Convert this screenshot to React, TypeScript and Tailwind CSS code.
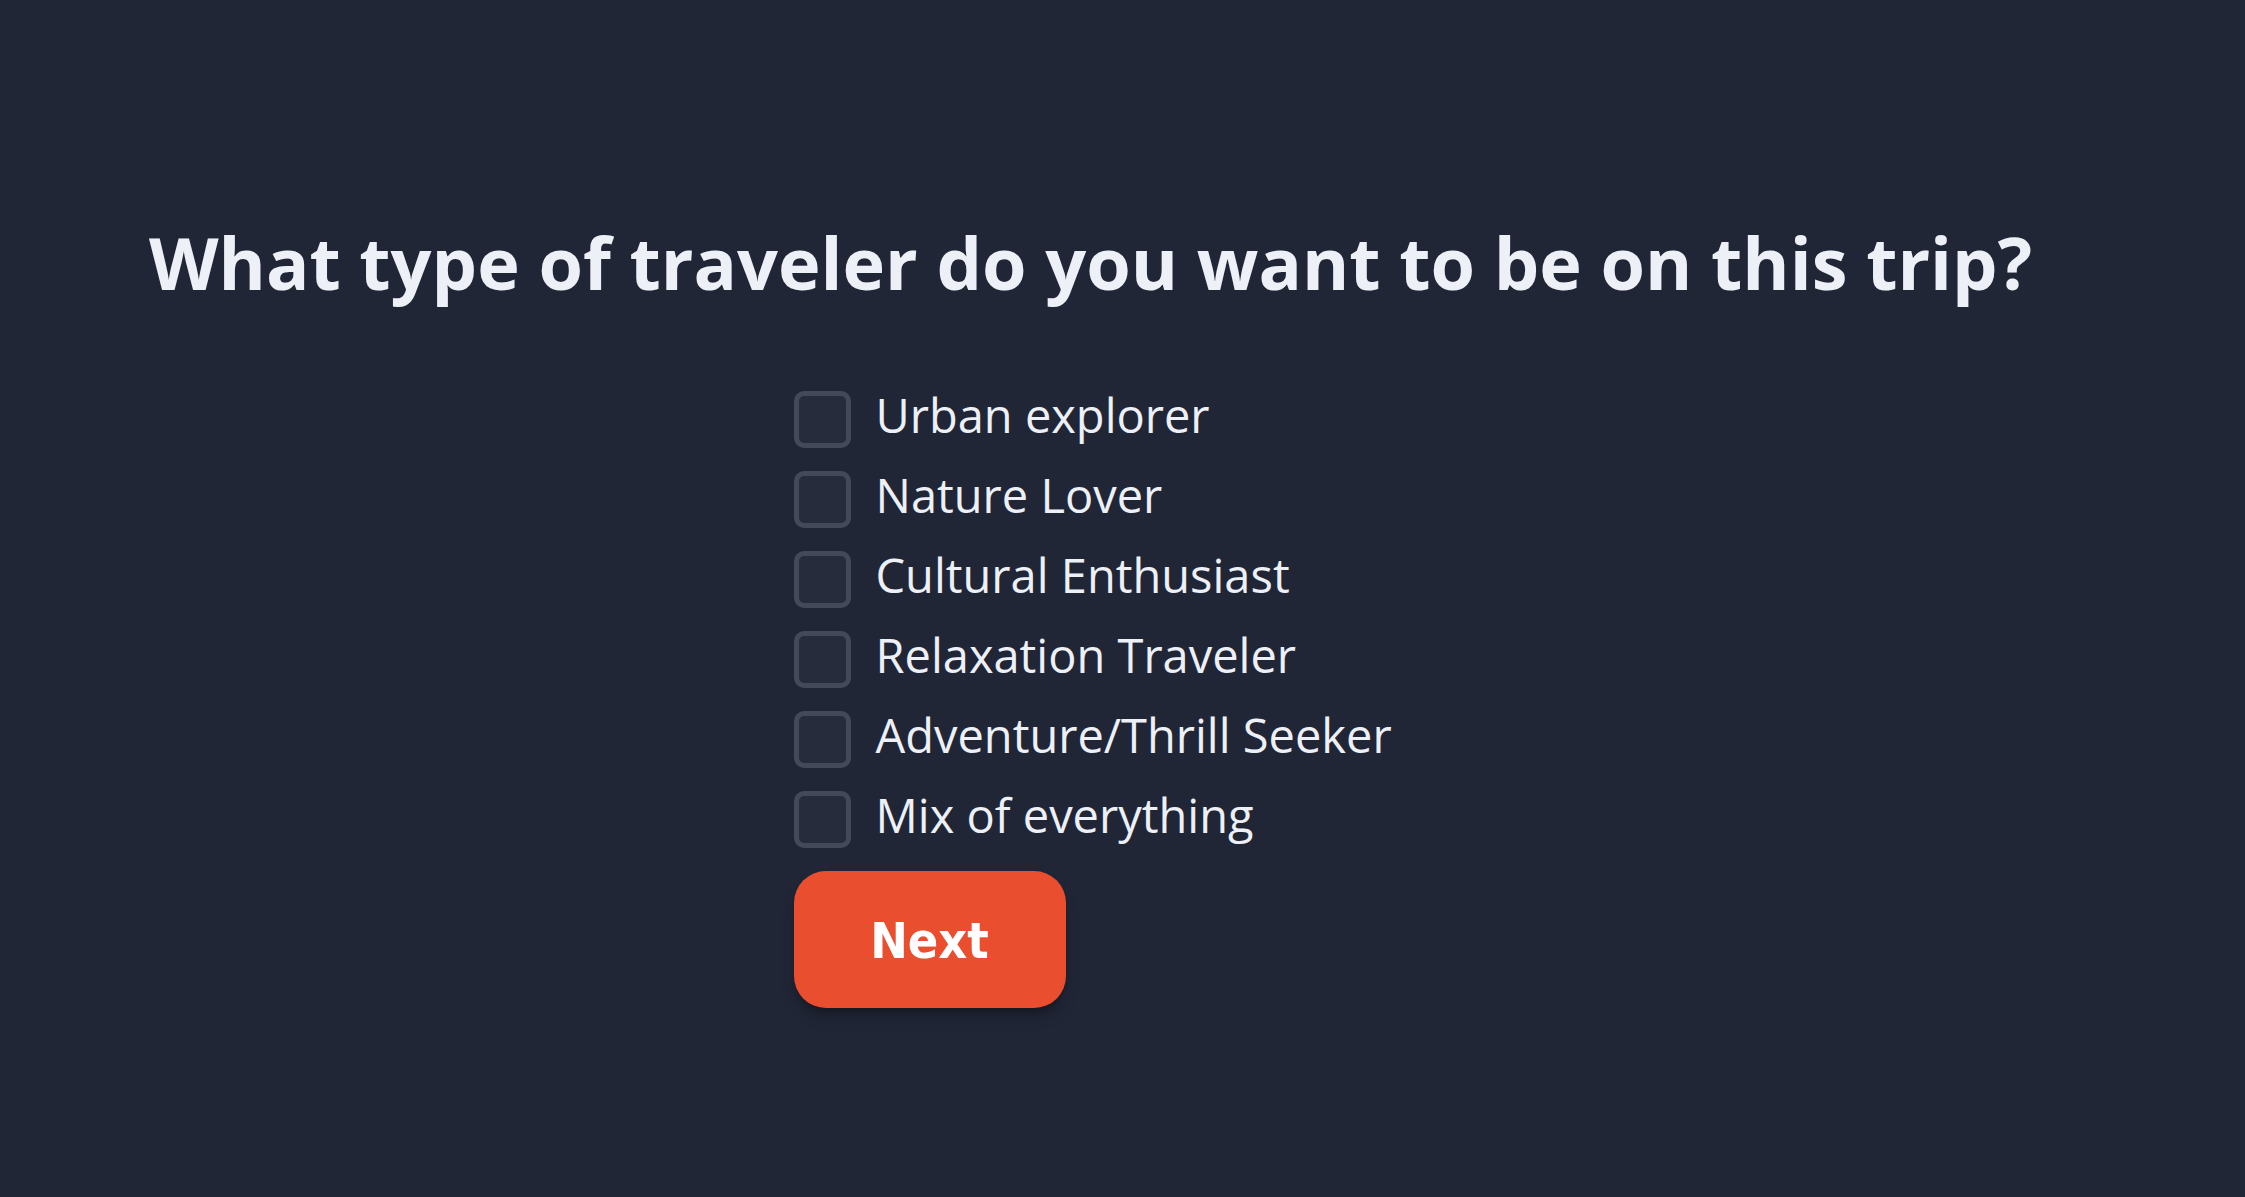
import { useState } from "react";

const options = [
  "Urban explorer",
  "Nature Lover",
  "Cultural Enthusiast",
  "Relaxation Traveler",
  "Adventure/Thrill Seeker",
  "Mix of everything",
];

export default function App() {
  const [picked, setPicked] = useState<string[]>([]);

  const toggle = (opt: string) =>
    setPicked((p) => (p.includes(opt) ? p.filter((o) => o !== opt) : [...p, opt]));

  return (
    <div className="min-h-screen bg-[#212637] font-['Open_Sans',sans-serif] text-[#edf0f7]">
      <div className="flex flex-col items-center pt-[226px] pr-[64px]">
        <h1 className="text-[72px] font-bold leading-none whitespace-nowrap">
          What type of traveler do you want to be on this trip?
        </h1>

        <div className="mt-[93px] w-[594px] flex flex-col gap-[23px]">
          {options.map((opt) => (
            <label key={opt} className="flex items-center gap-[25px] h-[57px] cursor-pointer">
              <input
                type="checkbox"
                checked={picked.includes(opt)}
                onChange={() => toggle(opt)}
                className="appearance-none w-[57px] h-[57px] shrink-0 rounded-[10px] border-[5px] border-[#434959] bg-[#272c3d] checked:bg-[#e94e2f] checked:border-[#e94e2f]"
              />
              <span className="text-[47px] leading-none whitespace-nowrap pb-[8px]">{opt}</span>
            </label>
          ))}

          <button className="w-[272px] h-[137px] pt-[4px] rounded-[32px] bg-[#e94e2f] shadow-lg shadow-black/30 text-white font-bold text-[50px] font-['DejaVu_Sans_Condensed','DejaVu_Sans',sans-serif]">
            Next
          </button>
        </div>
      </div>
    </div>
  );
}
